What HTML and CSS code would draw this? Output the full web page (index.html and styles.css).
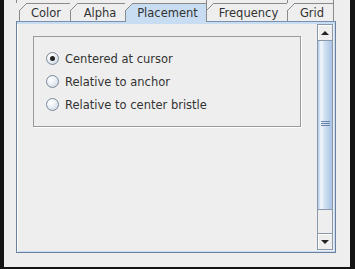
FILE: index.html
```html
<!DOCTYPE html>
<html lang="en">
<head>
<link rel="stylesheet" href="styles.css">
</head>
<body>
<div class="window">
  <div class="tabpane">
    <div class="back-run">
      <span class="back-tab back-a"></span>
      <span class="back-tab back-b"></span>
      <span class="back-tab back-c"></span>
    </div>
    <div class="tabs">
      <div class="tab">Color</div>
      <div class="tab">Alpha</div>
      <div class="tab selected">Placement</div>
      <div class="tab">Frequency</div>
      <div class="tab">Grid</div>
    </div>
    <div class="content">
      <div class="view">
        <div class="group">
          <label class="radio"><span class="dot checked"></span>Centered at cursor</label>
          <label class="radio"><span class="dot"></span>Relative to anchor</label>
          <label class="radio"><span class="dot"></span>Relative to center bristle</label>
        </div>
      </div>
      <div class="scrollbar">
        <div class="sb-btn"><span class="arrow-up"></span></div>
        <div class="sb-track">
          <div class="sb-thumb">
            <span class="grip"></span>
          </div>
        </div>
        <div class="sb-btn"><span class="arrow-down"></span></div>
      </div>
    </div>
  </div>
</div>
</body>
</html>
```

FILE: styles.css
```css
html, body {
  margin: 0;
  padding: 0;
  background: #111;
}

.window {
  width: 355px;
  height: 269px;
  box-sizing: border-box;
  background: #eeeeee;
  border-left: 4px solid #141414;
  border-right: 5px solid #141414;
  border-bottom: 2px solid #141414;
  font-family: "DejaVu Sans", sans-serif;
  color: #333333;
}

.tabpane {
  margin-left: 12px;
  width: 320px;
}

/* second run of tabs, only its bottom shows */
.back-run {
  display: flex;
  height: 3px;
}

.back-tab {
  display: block;
  border-left: 1px solid #8a8a8a;
  height: 3px;
}

.back-a { width: 189px; }
.back-b { width: 80px; }
.back-c { width: 45px; border-right: 1px solid #8a8a8a; }

.tabs {
  display: flex;
  height: 18px;
  padding-left: 3px;
}

.tab {
  position: relative;
  box-sizing: border-box;
  height: 18px;
  padding: 2px 0 0 0;
  text-align: center;
  border: 1px solid #8a8a8a;
  border-bottom: none;
  border-left: none;
  font-size: 11.5px;
  line-height: 15px;
  background: #eeeeee;
  color: #333333;
}

.tab:first-child {
  border-left: 1px solid #8a8a8a;
}

.tab::before {
  content: "";
  position: absolute;
  top: -1px;
  left: -1px;
  width: 8px;
  height: 8px;
  background: linear-gradient(135deg, #eeeeee 0 44%, #8a8a8a 44% 56%, transparent 56%);
}

.tab:nth-child(1) { width: 52px; padding-left: 2px; }
.tab:nth-child(2) { width: 55px; padding-left: 4px; }
.tab:nth-child(3) { width: 81px; padding-left: 3px; }
.tab:nth-child(4) { width: 81px; padding-left: 3px; }
.tab:nth-child(5) { width: 46px; padding-left: 3px; }

.tab.selected {
  background: #c8ddf2;
  height: 19px;
  margin-bottom: -1px;
  z-index: 1;
}

.content {
  display: flex;
  box-sizing: border-box;
  height: 232px;
  border: 1px solid #6b7f9f;
  border-top-color: #7b8fae;
  box-shadow: inset 1px 1px 0 #ffffff, inset -1px -1px 0 #c8ddf2;
  padding: 3px 2px 2px 2px;
  background: #eeeeee;
  position: relative;
}

.content::before {
  content: "";
  position: absolute;
  left: 0;
  right: 0;
  top: 0;
  height: 2px;
  background: #c8ddf2;
}

.view {
  flex: 1;
  padding: 11px 0 0 14px;
}

.group {
  width: 268px;
  height: 91px;
  border: 1px solid #9a9a9a;
  box-shadow: 1px 1px 0 #ffffff;
  padding: 15px 0 0 12px;
  box-sizing: border-box;
  display: flex;
  flex-direction: column;
  gap: 10px;
}

.radio {
  display: flex;
  align-items: center;
  height: 13px;
  font-size: 11.5px;
  color: #333333;
}

.dot {
  width: 11px;
  height: 11px;
  border-radius: 50%;
  border: 1px solid #7c8a99;
  background: radial-gradient(circle at 35% 30%, #ffffff 0, #eef2f8 40%, #c3cfdf 100%);
  margin-right: 6px;
  position: relative;
  flex: none;
}

.dot.checked::after {
  content: "";
  position: absolute;
  left: 3px;
  top: 3px;
  width: 5px;
  height: 5px;
  border-radius: 50%;
  background: #222222;
}

.scrollbar {
  width: 16px;
  display: flex;
  flex-direction: column;
  border: 1px solid #8a99aa;
  box-sizing: border-box;
  margin-top: -1px;
}

.sb-btn {
  height: 15px;
  flex: none;
  background: #eeeeee;
  box-shadow: inset 1px 1px 0 #ffffff;
  display: flex;
  align-items: center;
  justify-content: center;
}

.sb-btn:first-child {
  border-bottom: 1px solid #8a99aa;
}

.sb-btn:last-child {
  border-top: 1px solid #8a99aa;
}

.arrow-up {
  width: 0;
  height: 0;
  border-left: 4px solid transparent;
  border-right: 4px solid transparent;
  border-bottom: 4px solid #222222;
}

.arrow-down {
  width: 0;
  height: 0;
  border-left: 4px solid transparent;
  border-right: 4px solid transparent;
  border-top: 4px solid #222222;
}

.sb-track {
  flex: 1;
  background: #eeeeee;
  display: flex;
  flex-direction: column;
}

.sb-thumb {
  height: 169px;
  box-sizing: border-box;
  border-bottom: 1px solid #8a99aa;
  background: linear-gradient(90deg, #b0c8e6 0, #f4f8fc 22%, #d4e2f2 45%, #bcd2ec 75%, #a8c2e2 100%);
  display: flex;
  align-items: center;
  justify-content: center;
}

.grip {
  width: 9px;
  height: 5px;
  margin-top: -4px;
  background: repeating-linear-gradient(180deg, #6b85aa 0 1px, transparent 1px 2px);
}
```
